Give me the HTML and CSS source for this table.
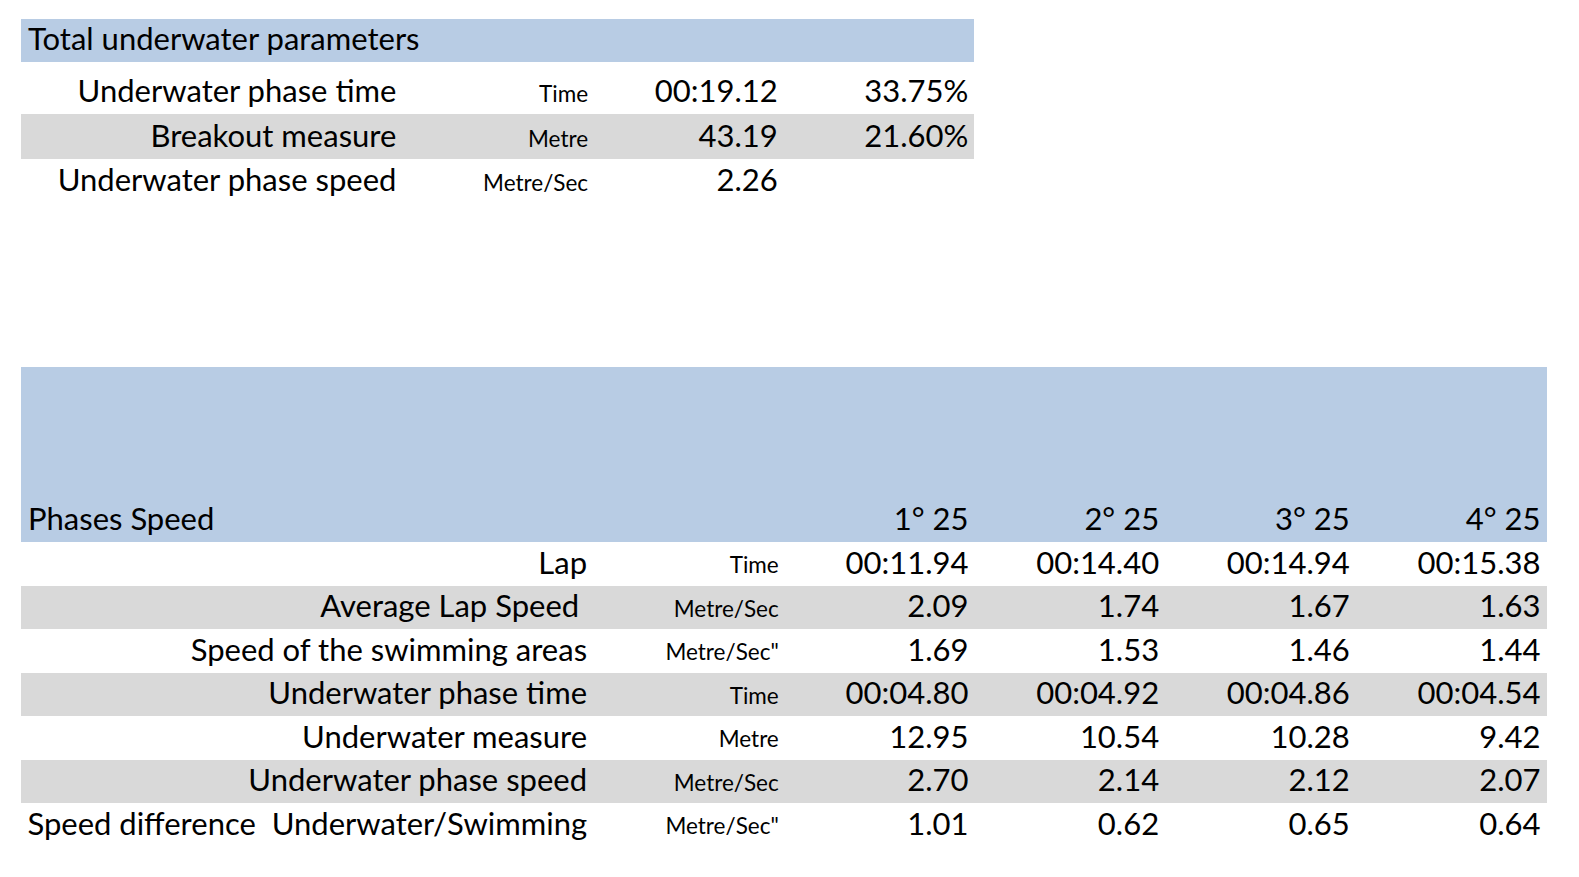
FILE: index.html
```html
<!DOCTYPE html>
<html lang="en">
<head>
<meta charset="utf-8">
<title>Underwater parameters</title>
<link rel="stylesheet" href="styles.css">
</head>
<body>
<main class="sheet">
  <section class="tbl tbl-top">
    <div class="row row-head blue">
      <div class="cell title span-all">Total underwater parameters</div>
    </div>
    <div class="row row-tall">
      <div class="cell lbl span2">Underwater phase time</div>
      <div class="cell unit">Time</div>
      <div class="cell num">00:19.12</div>
      <div class="cell num">33.75%</div>
    </div>
    <div class="row row-mid gray">
      <div class="cell lbl span2">Breakout measure</div>
      <div class="cell unit">Metre</div>
      <div class="cell num">43.19</div>
      <div class="cell num">21.60%</div>
    </div>
    <div class="row row-std">
      <div class="cell lbl span2">Underwater phase speed</div>
      <div class="cell unit">Metre/Sec</div>
      <div class="cell num">2.26</div>
      <div class="cell num"></div>
    </div>
  </section>

  <section class="tbl tbl-bottom">
    <div class="row row-band blue">
      <div class="cell title span4">Phases Speed</div>
      <div class="cell num">1° 25</div>
      <div class="cell num">2° 25</div>
      <div class="cell num">3° 25</div>
      <div class="cell num">4° 25</div>
    </div>
    <div class="row row-b">
      <div class="cell lbl span3">Lap</div>
      <div class="cell unit">Time</div>
      <div class="cell num">00:11.94</div>
      <div class="cell num">00:14.40</div>
      <div class="cell num">00:14.94</div>
      <div class="cell num">00:15.38</div>
    </div>
    <div class="row row-b gray">
      <div class="cell lbl span3">Average Lap Speed&nbsp;</div>
      <div class="cell unit">Metre/Sec</div>
      <div class="cell num">2.09</div>
      <div class="cell num">1.74</div>
      <div class="cell num">1.67</div>
      <div class="cell num">1.63</div>
    </div>
    <div class="row row-b">
      <div class="cell lbl span3">Speed of the swimming areas</div>
      <div class="cell unit">Metre/Sec"</div>
      <div class="cell num">1.69</div>
      <div class="cell num">1.53</div>
      <div class="cell num">1.46</div>
      <div class="cell num">1.44</div>
    </div>
    <div class="row row-b gray">
      <div class="cell lbl span3">Underwater phase time</div>
      <div class="cell unit">Time</div>
      <div class="cell num">00:04.80</div>
      <div class="cell num">00:04.92</div>
      <div class="cell num">00:04.86</div>
      <div class="cell num">00:04.54</div>
    </div>
    <div class="row row-b">
      <div class="cell lbl span3">Underwater measure</div>
      <div class="cell unit">Metre</div>
      <div class="cell num">12.95</div>
      <div class="cell num">10.54</div>
      <div class="cell num">10.28</div>
      <div class="cell num">9.42</div>
    </div>
    <div class="row row-b gray">
      <div class="cell lbl span3">Underwater phase speed</div>
      <div class="cell unit">Metre/Sec</div>
      <div class="cell num">2.70</div>
      <div class="cell num">2.14</div>
      <div class="cell num">2.12</div>
      <div class="cell num">2.07</div>
    </div>
    <div class="row row-b">
      <div class="cell lbl span3 pre">Speed difference  Underwater/Swimming</div>
      <div class="cell unit">Metre/Sec"</div>
      <div class="cell num">1.01</div>
      <div class="cell num">0.62</div>
      <div class="cell num">0.65</div>
      <div class="cell num">0.64</div>
    </div>
  </section>
</main>
</body>
</html>
```

FILE: styles.css
```css
html, body {
  margin: 0;
  padding: 0;
  background: #ffffff;
}

body {
  font-family: Lato, "Open Sans", "Liberation Sans", sans-serif;
  color: #000000;
}

.sheet {
  padding: 19px 0 0 21px;
  display: flex;
  flex-direction: column;
  align-items: flex-start;
  gap: 164px;
}

.tbl {
  display: flex;
  flex-direction: column;
  width: max-content;
}

.row {
  display: grid;
  align-items: end;
}

.tbl-top .row {
  grid-template-columns: repeat(5, 190.7px);
}

.tbl-bottom .row {
  grid-template-columns: repeat(8, 190.7px);
}

.blue { background: #b8cce4; }
.gray { background: #d9d9d9; }

.row-head { height: 43px; }
.row-tall { height: 52px; }
.row-mid  { height: 45px; }
.row-std  { height: 44px; }
.row-band { height: 175px; }
.row-b    { height: 43.5px; }

.cell {
  font-size: 31px;
  line-height: 1;
  padding: 0 6px 8px 6px;
  white-space: nowrap;
  text-align: right;
}

.title {
  text-align: left;
  padding-left: 7px;
}

.unit {
  font-size: 22.5px;
  padding-right: 5px;
  padding-bottom: 9px;
}

.pre { white-space: pre; }

.span-all { grid-column: 1 / -1; }
.span2 { grid-column: span 2; }
.span3 { grid-column: span 3; }
.span4 { grid-column: span 4; }
```
